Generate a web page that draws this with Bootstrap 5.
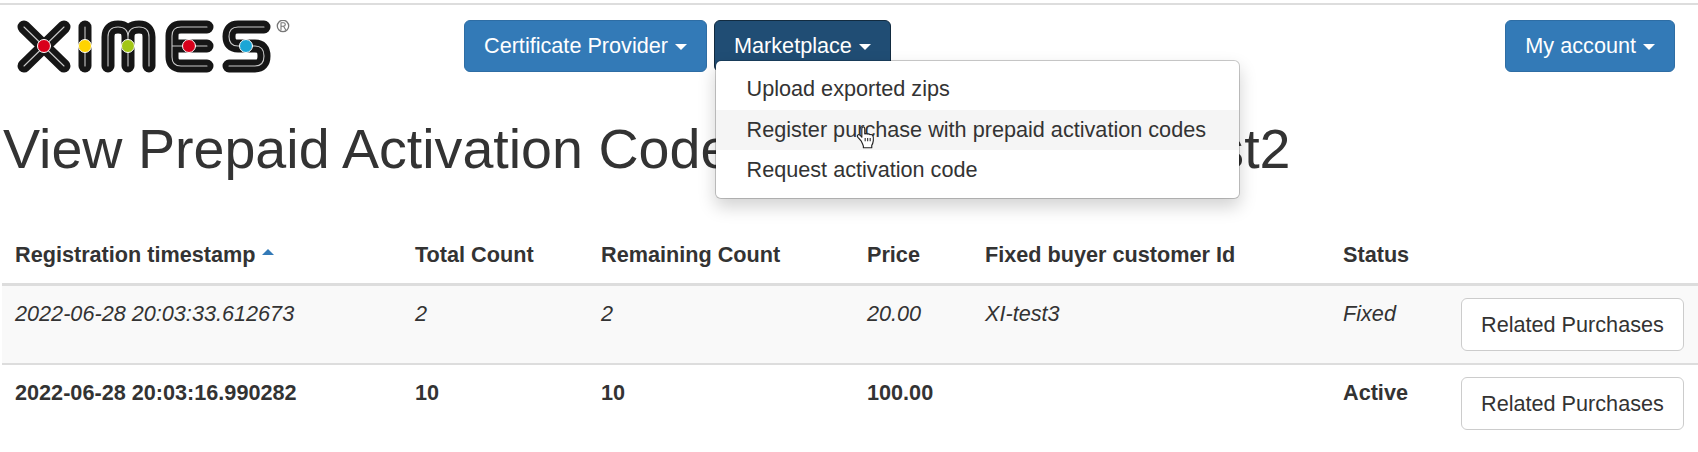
<!DOCTYPE html>
<html lang="en">
<head>
    <meta charset="UTF-8">
    <title>View Prepaid Activation Codes</title>
    <link href="https://cdn.jsdelivr.net/npm/bootstrap@5.3.0/dist/css/bootstrap.min.css" rel="stylesheet">
    <style>
        body {
            font-family: "Liberation Sans", Arial, sans-serif;
            font-size: 21.65px;
            color: #333;
            overflow: hidden;
        }
        .top-rule {
            height: 2px;
            margin-top: 3px;
            background: #ddd;
        }
        .top-bar {
            height: 67px;
            padding: 15px 23px 0 15px;
        }
        .logo {
            width: 300px;
            height: 67px;
            margin-right: 149px;
            flex: none;
        }
        .nav-btns {
            gap: 7px;
        }
        .btn-blue, .btn-blue:hover {
            font-size: 21.65px;
            line-height: 30px;
            padding: 10px 19px;
            color: #fff;
            background: #337ab7;
            border: 1px solid #2e6da4;
            border-radius: 6px;
        }
        .btn-blue.dropdown-toggle::after {
            margin-left: 7px;
            vertical-align: 3px;
            border-top: 6px solid;
            border-right: 6px solid transparent;
            border-left: 6px solid transparent;
            border-bottom: 0;
        }
        .btn-blue.open, .btn-blue.open:hover {
            background: #204d74;
            border-color: #122b40;
            color: #fff;
        }
        .menu-box {
            top: 40px;
            left: 1px;
            width: 525px;
            padding: 8px 0 7px;
            font-size: 21.65px;
            border-radius: 6px;
            border: 1px solid rgba(0,0,0,.2);
            box-shadow: 0 8px 17px rgba(0,0,0,.175);
        }
        .menu-box .dropdown-item {
            padding: 6px 30.5px;
            line-height: 28.6px;
            color: #333;
        }
        .menu-box .dropdown-item.hovered {
            background: #f5f5f5;
        }
        .hand {
            position: absolute;
            left: 139px;
            top: 65px;
            width: 22px;
            height: 23px;
        }
        h1.page-title {
            font-size: 55.6px;
            font-weight: 400;
            line-height: 1.1;
            color: #333;
            margin: 47px 0 0 3px;
            white-space: nowrap;
        }
        .codes-table {
            table-layout: fixed;
            width: 1696px;
            margin: 47px 0 0 2px;
            color: #333;
        }
        .codes-table th {
            padding: 13px 13px 14px;
            line-height: 29px;
            border-bottom: 3px solid #ddd;
            font-weight: 700;
            white-space: nowrap;
        }
        .codes-table td {
            padding: 12px 13px;
            line-height: 31px;
            vertical-align: top;
            border-bottom: 0;
            background: transparent;
            box-shadow: none;
        }
        .codes-table tr.striped td {
            background: #f9f9f9;
            border-bottom: 2px solid #ddd;
        }
        .sort-up {
            display: inline-block;
            width: 0;
            height: 0;
            margin-left: 6px;
            vertical-align: 7px;
            border-left: 6px solid transparent;
            border-right: 6px solid transparent;
            border-bottom: 6px solid #337ab7;
        }
        .btn-plain, .btn-plain:hover {
            font-size: 21.65px;
            line-height: 31px;
            padding: 10px 19px 10px 19px;
            color: #333;
            background: #fff;
            border: 1px solid #ccc;
            border-radius: 6px;
            white-space: nowrap;
        }
    </style>
</head>
<body>
    <div class="top-rule"></div>

    <div class="top-bar d-flex align-items-start">
        <svg class="logo" viewBox="0 0 300 67" aria-label="XIMES">
            <g transform="translate(-15,-20)" fill="none" stroke-linecap="round" stroke-linejoin="round">
                <g stroke="#161616" stroke-width="13">
                    <path d="M24 27L64 66M64 27L24 66"/>
                    <path d="M85 27V66"/>
                    <path d="M108 66V37Q108 27 118 27Q128 27 128 37V66M128 37Q128 27 139 27Q149 27 149 37V66"/>
                    <path d="M207 27H181Q172 27 172 36V57Q172 66 181 66H207M172 46H207"/>
                    <path d="M264 27H238Q229 27 229 36.500Q229 46 238 46H255Q264 46 264 56Q264 66 255 66H229"/>
                </g>
                <g stroke="#c9c9c9" stroke-width="1.100">
                    <path d="M24 27L64 66M64 27L24 66"/>
                    <path d="M85 27V66"/>
                    <path d="M108 66V37Q108 27 118 27Q128 27 128 37V66M128 37Q128 27 139 27Q149 27 149 37V66"/>
                    <path d="M207 27H181Q172 27 172 36V57Q172 66 181 66H207M172 46H207"/>
                    <path d="M264 27H238Q229 27 229 36.500Q229 46 238 46H255Q264 46 264 56Q264 66 255 66H229"/>
                </g>
                <g stroke="#fff" stroke-width="1">
                    <circle cx="44" cy="46" r="6.500" fill="#d9001b"/>
                    <circle cx="85" cy="46" r="6.500" fill="#ffd400"/>
                    <circle cx="128" cy="46" r="6.500" fill="#a2c617"/>
                    <circle cx="189" cy="46" r="6.500" fill="#d9001b"/>
                    <circle cx="246" cy="46" r="6.500" fill="#1ba6d6"/>
                </g>
                <circle cx="283" cy="26" r="5.700" stroke="#777" stroke-width="1.300"/>
                <path d="M281 29.500V22.800H283.500Q285.300 22.800 285.300 24.500Q285.300 26.200 283.500 26.200H281M283.600 26.200L285.500 29.500" stroke="#777" stroke-width="1.100"/>
            </g>
        </svg>

        <div class="d-flex nav-btns flex-grow-1">
            <button class="btn btn-blue dropdown-toggle" type="button">Certificate Provider</button>
            <div class="dropdown">
                <button class="btn btn-blue open dropdown-toggle" type="button">Marketplace</button>
                <div class="dropdown-menu show menu-box">
                    <a class="dropdown-item" href="#">Upload exported zips</a>
                    <a class="dropdown-item hovered" href="#">Register purchase with prepaid activation codes</a>
                    <a class="dropdown-item" href="#">Request activation code</a>
                    <svg class="hand" viewBox="0 0 20 22">
                        <path d="M5.500 14.500L2.300 10.800Q1 9 2.500 8.300Q3.800 7.900 5 9.500L6 10.700V2.700Q6 1 7.400 1Q8.800 1 8.800 2.700V7.500Q10.500 7 11.300 7.700Q13 7.300 13.800 8.200Q15.800 7.800 16.500 9.200Q17.400 10.500 17 14Q16.600 17 15.500 18.500V20.800H7.500V19.200Q6.800 17 5.500 14.500Z" fill="#fff" stroke="#222" stroke-width="1.100" stroke-linejoin="round"/>
                        <path d="M9.200 11.500V14.500M11.600 11.500V14.500M14 11.500V14.500" stroke="#222" stroke-width="1" fill="none"/>
                    </svg>
                </div>
            </div>
        </div>

        <button class="btn btn-blue dropdown-toggle" type="button">My account</button>
    </div>

    <h1 class="page-title">View Prepaid Activation Codes for customer XI-test2</h1>

    <table class="table codes-table mb-0">
        <colgroup>
            <col style="width:400px">
            <col style="width:186px">
            <col style="width:266px">
            <col style="width:118px">
            <col style="width:358px">
            <col style="width:118px">
            <col>
        </colgroup>
        <thead>
            <tr>
                <th>Registration timestamp<span class="sort-up"></span></th>
                <th>Total Count</th>
                <th>Remaining Count</th>
                <th>Price</th>
                <th>Fixed buyer customer Id</th>
                <th>Status</th>
                <th></th>
            </tr>
        </thead>
        <tbody>
            <tr class="striped fst-italic">
                <td>2022-06-28 20:03:33.612673</td>
                <td>2</td>
                <td>2</td>
                <td>20.00</td>
                <td>XI-test3</td>
                <td>Fixed</td>
                <td><button class="btn btn-plain fst-normal" type="button">Related Purchases</button></td>
            </tr>
            <tr class="fw-bold">
                <td>2022-06-28 20:03:16.990282</td>
                <td>10</td>
                <td>10</td>
                <td>100.00</td>
                <td></td>
                <td>Active</td>
                <td><button class="btn btn-plain fw-normal" type="button">Related Purchases</button></td>
            </tr>
        </tbody>
    </table>

    <script src="https://cdn.jsdelivr.net/npm/bootstrap@5.3.0/dist/js/bootstrap.bundle.min.js"></script>
</body>
</html>
